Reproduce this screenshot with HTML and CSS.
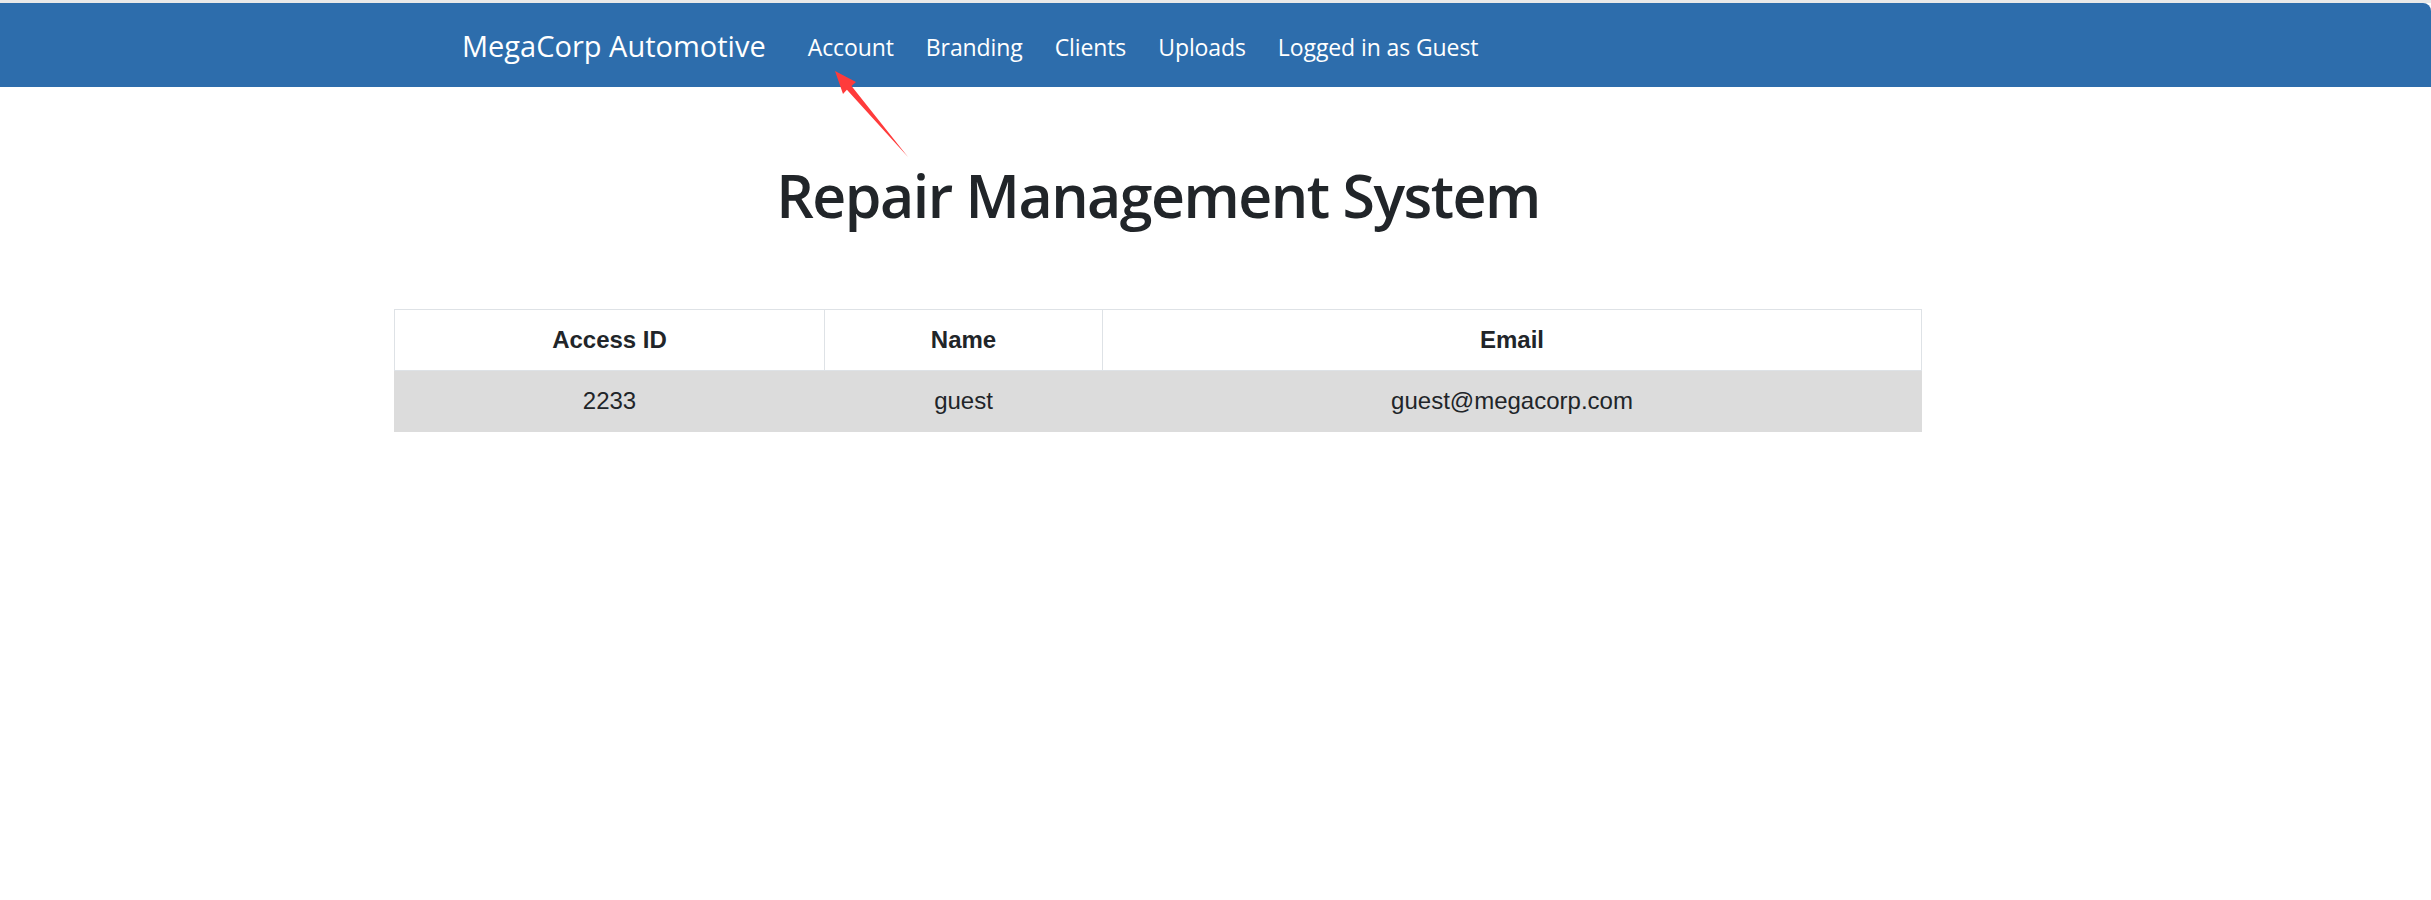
FILE: index.html
```html
<!DOCTYPE html>
<html lang="en">
<head>
<meta charset="utf-8">
<title>Repair Management System</title>
<link rel="stylesheet" href="styles.css">
</head>
<body>
<nav class="navbar">
  <a class="brand" href="#">MegaCorp Automotive</a>
  <ul class="nav">
    <li><a href="#">Account</a></li>
    <li><a href="#">Branding</a></li>
    <li><a href="#">Clients</a></li>
    <li><a href="#">Uploads</a></li>
    <li><a href="#">Logged in as Guest</a></li>
  </ul>
</nav>
<main class="content">
  <h1 class="title">Repair Management System</h1>
  <table class="grid">
    <colgroup>
      <col class="c1"><col class="c2"><col class="c3">
    </colgroup>
    <thead>
      <tr><th>Access ID</th><th>Name</th><th>Email</th></tr>
    </thead>
    <tbody>
      <tr><td>2233</td><td>guest</td><td>guest@megacorp.com</td></tr>
    </tbody>
  </table>
</main>
<svg class="annotation" width="2431" height="900" viewBox="0 0 2431 900" aria-hidden="true">
  <polygon points="835,71 856,82 851.5,85.9 908,157 846.9,89.7 843,94" fill="#ff3b3b"/>
</svg>
</body>
</html>
```
FILE: styles.css
```css
html, body {
  margin: 0;
  padding: 0;
  background: #fff;
}
body {
  border-top: 3px solid #e9e9e9;
  font-family: "Open Sans", "Noto Sans", sans-serif;
  color: #212529;
  position: relative;
}
.navbar {
  height: 84px;
  background: #2d6dac;
  border-top-right-radius: 8px;
  display: flex;
  align-items: center;
  padding-left: 462px;
  box-sizing: border-box;
}
.brand {
  color: #fff;
  text-decoration: none;
  font-size: 29px;
  margin-right: 26px;
  letter-spacing: 0;
}
.nav {
  list-style: none;
  margin: 0;
  padding: 0;
  display: flex;
}
.nav a {
  display: block;
  color: #fff;
  text-decoration: none;
  font-size: 23px;
  padding: 4px 16px 0;
  letter-spacing: -0.1px;
}
.content {
  width: 1528px;
  margin-left: 394px;
}
.title {
  margin: 72px 0 78px;
  font-size: 59px;
  line-height: 72px;
  font-weight: 600;
  text-align: center;
  letter-spacing: -1.5px;
}
.grid {
  width: 1528px;
  border-collapse: collapse;
  table-layout: fixed;
  font-family: "Liberation Sans", Arial, sans-serif;
  font-size: 24px;
  line-height: 28px;
  color: #212529;
}
.c1 { width: 430px; }
.c2 { width: 278px; }
.grid th, .grid td {
  border: 1px solid #dee2e6;
  padding: 16px 8px;
  text-align: center;
}
.grid th {
  font-weight: bold;
}
.grid tbody tr {
  background: #dcdcdc;
}
.grid tbody td {
  border-color: #dcdcdc;
}
.annotation {
  position: absolute;
  top: -3px;
  left: 0;
  pointer-events: none;
}
```
